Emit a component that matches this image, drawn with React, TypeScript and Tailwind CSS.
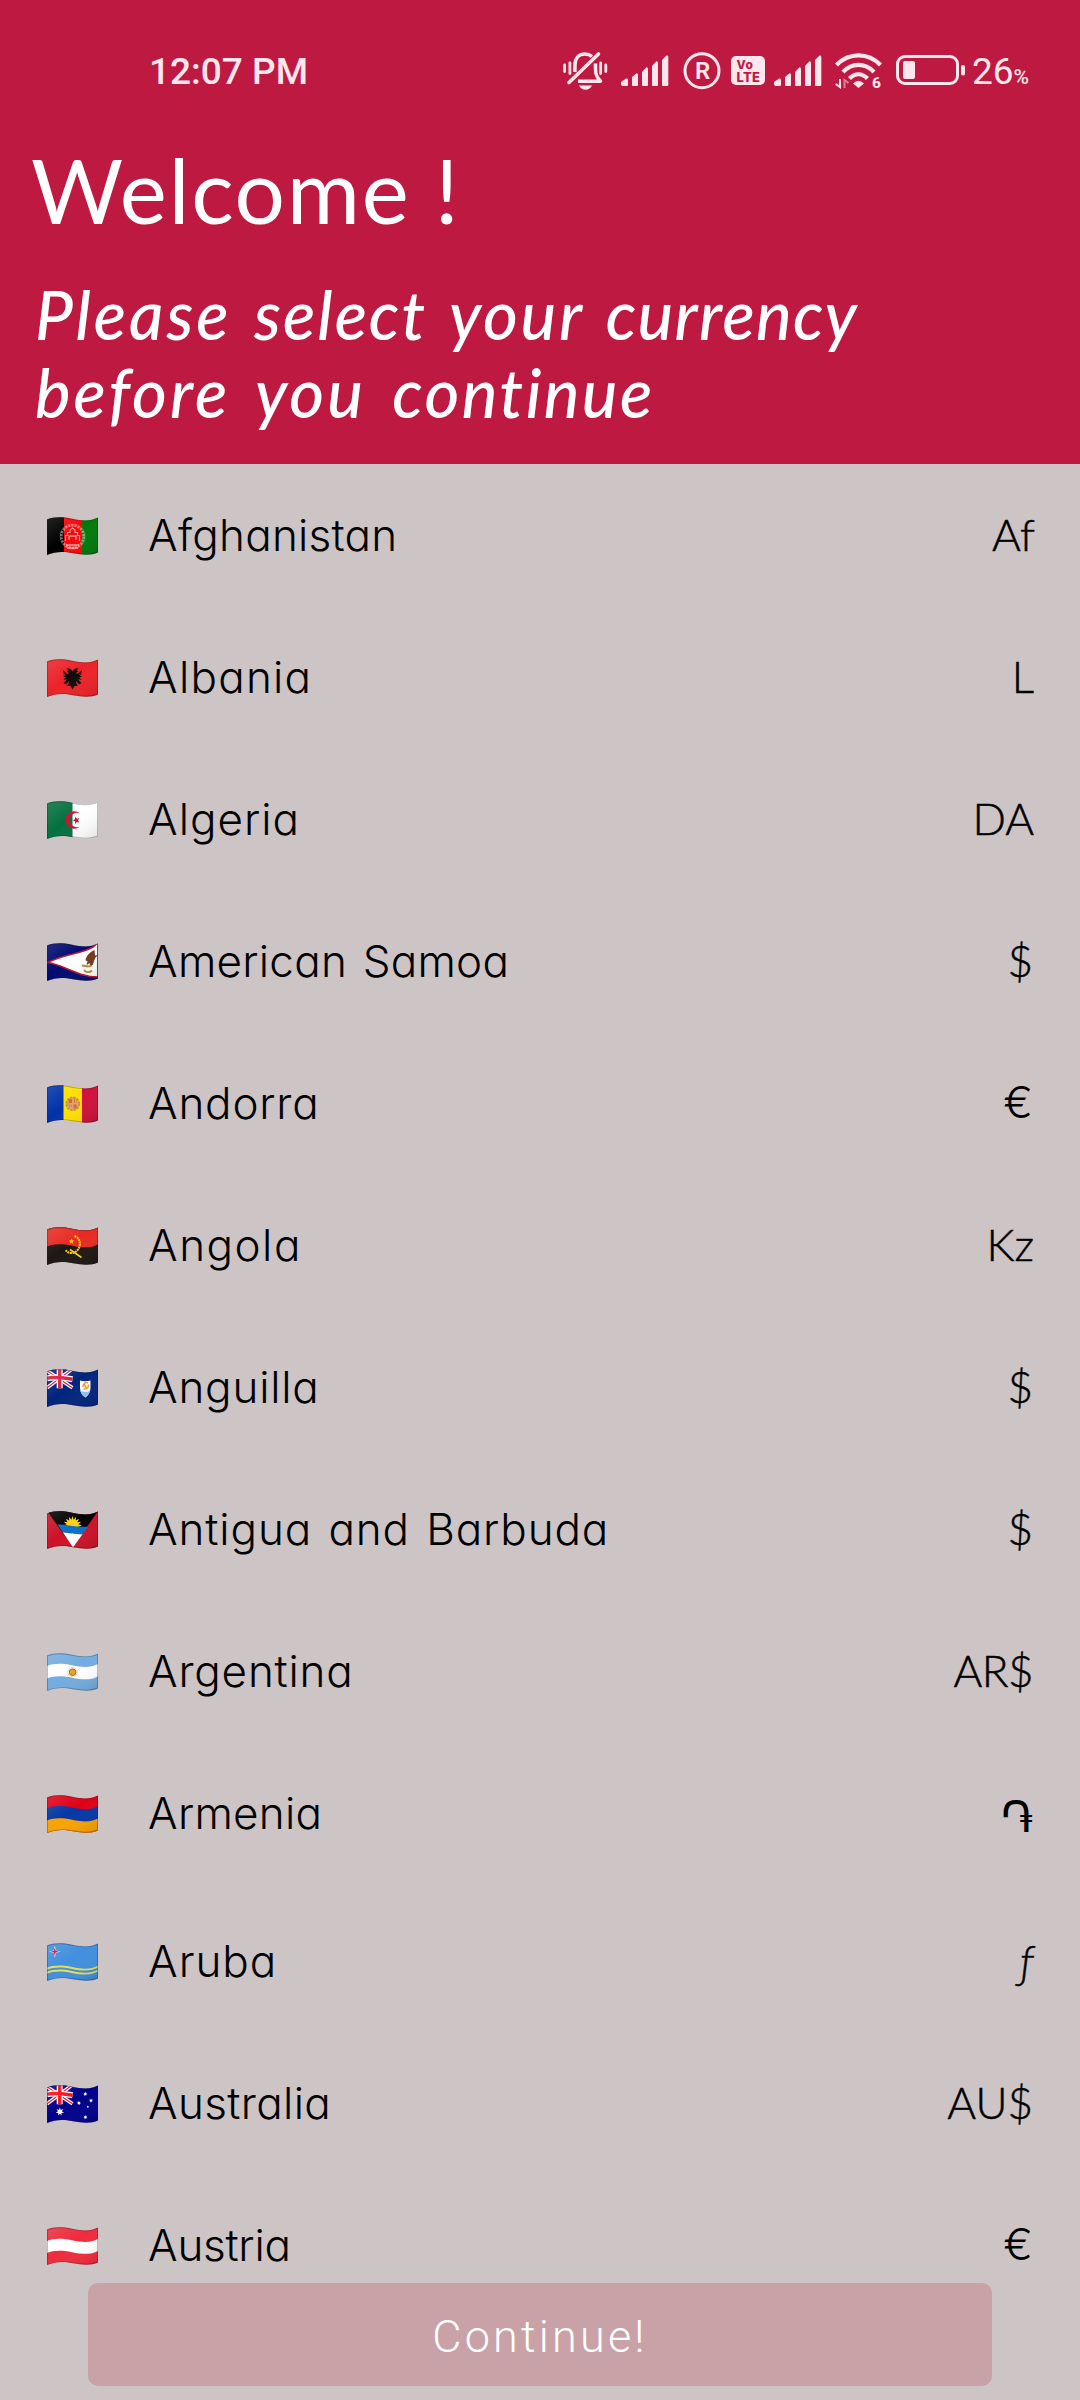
import React, { useId } from "react";

const CREAM = "#fde6ec";
const OUTLINE =
  "M0 2.5 C6 0 14 -.5 25 1.8 S44 4.2 51 .4 V35.5 C45 38.2 37 38.4 26 36.3 S8 35 0 38 Z";

/** Wavy band that follows the top edge of the cloth. */
function Band({ y, h, c }: { y: number; h: number; c: string }) {
  return (
    <path
      transform={`translate(0 ${y})`}
      d={`M0 2.5 C6 0 14 -.5 25 1.8 S44 4.2 51 .4 V${h + 0.4} C44 ${h + 4.2} 36 ${h + 4} 25 ${h + 1.8} S6 ${h} 0 ${h + 2.5} Z`}
      fill={c}
    />
  );
}

function UnionJack({ blue, red }: { blue: string; red: string }) {
  return (
    <g transform="translate(0 .8)">
      <path d="M0 0H25.5V18L0 18Z" fill={blue} />
      <path d="M0 1L25.5 18M25.5 -1L0 18" stroke="#fff" strokeWidth="3.6" />
      <path d="M0 1L25.5 18M25.5 -1L0 18" stroke={red} strokeWidth="1.2" />
      <path d="M12.7 -2V18.5M0 8.4C9 6.5 16 8 25.5 9.4" stroke="#fff" strokeWidth="6" fill="none" />
      <path d="M12.7 -2V18.5M0 8.4C9 6.5 16 8 25.5 9.4" stroke={red} strokeWidth="3.4" fill="none" />
    </g>
  );
}

function star(cx: number, cy: number, r: number, n: number, inner = 0.45) {
  const pts: string[] = [];
  for (let i = 0; i < n * 2; i++) {
    const a = (Math.PI * i) / n - Math.PI / 2;
    const q = i % 2 ? r * inner : r;
    pts.push(`${(cx + q * Math.cos(a)).toFixed(2)},${(cy + q * Math.sin(a)).toFixed(2)}`);
  }
  return pts.join(" ");
}

const art: Record<string, React.ReactNode> = {
  af: (
    <>
      <rect width="17" height="38" fill="#000" />
      <rect x="17" width="18" height="38" fill="#f90508" />
      <rect x="35" width="16" height="38" fill="#007a0b" />
      <circle cx="25.5" cy="19.5" r="11.2" fill="none" stroke="#fff" strokeOpacity=".45" strokeWidth="2.6" strokeDasharray="2.2 1" />
      <circle cx="25.5" cy="19.5" r="12.7" fill="none" stroke="#fff" strokeOpacity=".3" strokeWidth=".5" />
      <path d="M18.5 24V18.5H20.5V15.5H23V13L25.5 11L28 13V15.5H30.5V18.5H32.5V24" fill="none" stroke="#fff" strokeOpacity=".6" strokeWidth="1.2" />
      <path d="M19 28H32M20 31H31M22 23V19H29V23" fill="none" stroke="#fff" strokeOpacity=".6" strokeWidth="1.3" />
    </>
  ),
  al: (
    <>
      <rect width="51" height="38" fill="#ec2228" />
      <path
        d="M25.5 12L23 9.5L19.5 9.2L21.5 11.5L19.5 12L22 14L20.5 15L16 11L16 13.5H18L16 15.5H19L16 18H19L16.5 20.5H20L16.5 24L19 25.5L22 22L21.5 25L20 27H23.5L25.5 30.5L27.5 27H31L29.5 25L29 22L32 25.5L34.5 24L31 20.5H34.5L32 18H35L32 15.5H35L33 13.5H35V11L30.5 15L29 14L31.5 12L29.5 11.5L31.5 9.2L28 9.5Z"
        fill="#100b0b"
      />
    </>
  ),
  dz: (
    <>
      <rect width="26" height="38" fill="#04703f" />
      <rect x="25.5" width="26" height="38" fill="#fff" />
      <path d="M33 12.5A8.700 8.700 0 1 0 33 25.500A7.200 7.200 0 1 1 33 12.500Z" fill="#d21034" />
      <polygon points={star(29.3, 19.3, 3.8, 5)} transform="rotate(-90 29.3 19.3)" fill="#d21034" />
    </>
  ),
  as: (
    <>
      <rect width="51" height="38" fill="#000a70" />
      <path d="M51 -1L46 4C34 11 17 11 1 19.5C17 22 31 34 51 34Z" fill="#fff" stroke="#bd1030" strokeWidth="1.6" />
      <path d="M47.5 7C43 9 39 13 38.5 17.5L40.5 18L39.5 22L43 20L42.5 24L46 21.5L47 18L48.5 14.5L51 12L48 12.5Z" fill="#6e3a1c" />
      <path d="M35 22.5L41 23.5L45 22.5M37 27C39 30 43 29.5 45 27.5" fill="none" stroke="#b48a35" strokeWidth="1.8" />
    </>
  ),
  ad: (
    <>
      <rect width="17" height="38" fill="#0032a8" />
      <rect x="16.5" width="19" height="38" fill="#fedf00" />
      <rect x="35" width="16" height="38" fill="#d0103a" />
      <circle cx="25.8" cy="18.8" r="6.5" fill="#d9a66a" stroke="#b59543" strokeWidth="1.8" strokeDasharray="2.2 1.2" />
      <path d="M21.8 14H25V18H21.8ZM26.5 19.5H29.7V23.5H26.5Z" fill="#e0662b" />
      <path d="M27 14H30V18H27ZM22 19.5H25V22.5H22Z" fill="#f1c27a" />
      <path d="M27.6 14V18M29.2 14V18M22.7 19.5V22.5M24.2 19.5V22.5" stroke="#d0552b" strokeWidth=".8" />
    </>
  ),
  ao: (
    <>
      <rect width="51" height="38" fill="#1c1713" />
      <Band y={-1} h={18} c="#e72a22" />
      <path d="M27.5 9C35.5 11.5 34.5 24.5 25 26C22 26.2 20 24.8 18.6 23.3" fill="none" stroke="#f5cc1c" strokeWidth="2" strokeDasharray="2 .6" />
      <path d="M23 22.5L34.5 30.5" stroke="#f5cc1c" strokeWidth="1.6" />
      <polygon points={star(24.5, 14.3, 2.9, 5)} fill="#f5cc1c" />
    </>
  ),
  ai: (
    <>
      <rect width="51" height="38" fill="#01247d" />
      <UnionJack blue="#01247d" red="#d5203f" />
      <path d="M33 11.5C36 12.5 40 12.5 43.5 11.5V19C43 24 40.5 27 38.5 28.5C36 27 33.3 24 33 19Z" fill="#fff" />
      <path d="M33.3 22C36 23 41 23 43.2 22C42.2 25 40.5 27 38.5 28.5C36 27 34 25 33.3 22Z" fill="#8ec5e8" />
      <path d="M36 18C36 14 39 13 41 14M41.5 15.5C42 19 39 20.5 36.5 20M37 15L40 20" fill="none" stroke="#f39a2b" strokeWidth="1.5" />
    </>
  ),
  ag: (
    <>
      <rect width="51" height="38" fill="#ce1126" />
      <path d="M0 0H51L26 36Z" fill="#000" />
      <polygon points={star(25.5, 14.5, 9.5, 16, 0.62)} fill="#fcd116" />
      <path d="M10.5 13.5C20 13 30 17 41 15.5L35.5 23.2C29 23.5 23 22 15.8 21.2Z" fill="#0a6fc9" />
      <path d="M15.8 21.2C23 22 29 23.5 35.5 23.2L26 36.5Z" fill="#fff" />
    </>
  ),
  ar: (
    <>
      <rect width="51" height="38" fill="#74acdf" />
      <Band y={10.5} h={12.5} c="#fff" />
      <circle cx="25.6" cy="19.2" r="3.3" fill="#f0a11c" stroke="#9a6a2c" strokeWidth="1" />
      <circle cx="25.6" cy="19.2" r="4.6" fill="none" stroke="#d39a4a" strokeWidth=".8" strokeDasharray=".8 .8" />
    </>
  ),
  am: (
    <>
      <rect width="51" height="38" fill="#e00016" />
      <Band y={10.8} h={12.5} c="#0637a6" />
      <Band y={23} h={16} c="#f7a303" />
    </>
  ),
  aw: (
    <>
      <rect width="51" height="38" fill="#418fde" />
      <Band y={22.3} h={1.9} c="#e9e04f" />
      <Band y={26.3} h={1.9} c="#e9e04f" />
      <polygon points={star(7.8, 8.7, 5.8, 4, 0.28)} fill="#fff" />
      <polygon points={star(7.8, 8.7, 4.3, 4, 0.28)} fill="#d21034" />
    </>
  ),
  au: (
    <>
      <rect width="51" height="38" fill="#00008b" />
      <UnionJack blue="#00008b" red="#fb0d14" />
      <polygon points={star(12.9, 26.7, 4.3, 7)} fill="#fff" />
      <polygon points={star(38.3, 9, 2.2, 7)} fill="#fff" />
      <polygon points={star(31.9, 18, 2.2, 7)} fill="#fff" />
      <polygon points={star(44, 15.6, 2.2, 7)} fill="#fff" />
      <polygon points={star(38.4, 32.2, 2.2, 7)} fill="#fff" />
      <polygon points={star(40.8, 21.8, 1.3, 5)} fill="#fff" />
    </>
  ),
  at: (
    <>
      <rect width="51" height="38" fill="#ef2b3c" />
      <Band y={11.5} h={12} c="#fff" />
    </>
  ),
};

function Flag({ code }: { code: string }) {
  const id = useId();
  return (
    <svg width="51" height="39" viewBox="0 0 51 39" className="block shrink-0">
      <defs>
        <clipPath id={id}>
          <path d={OUTLINE} />
        </clipPath>
        <linearGradient id={`${id}s`} x1="0" y1="0" x2="1" y2="1">
          <stop offset="0" stopColor="#fff" stopOpacity=".14" />
          <stop offset=".45" stopColor="#fff" stopOpacity="0" />
          <stop offset="1" stopColor="#000" stopOpacity=".12" />
        </linearGradient>
      </defs>
      <g clipPath={`url(#${id})`}>
        {art[code]}
        <path d={OUTLINE} fill={`url(#${id}s)`} />
        <path d={OUTLINE} fill="none" stroke="#1a1a1a" strokeOpacity=".28" strokeWidth="2" />
      </g>
    </svg>
  );
}

type Row = { code: string; name: string; symbol: string; track: string; sym: string; tall?: boolean };

const LETTERS = "font-[Lato] font-light mr-[1px] [-webkit-text-stroke:0.5px_black]";
const DOLLAR = "font-[Lato] font-light mr-[2px] [-webkit-text-stroke:0.5px_black]";
const EURO = "font-[Inter] font-light mr-[2px]";

const rows: Row[] = [
  { code: "af", name: "Afghanistan", symbol: "Af", track: "tracking-[0.25px]", sym: "font-[Lato] font-light [-webkit-text-stroke:0.5px_black]" },
  { code: "al", name: "Albania", symbol: "L", track: "tracking-[1.25px]", sym: LETTERS },
  { code: "dz", name: "Algeria", symbol: "DA", track: "tracking-[1px]", sym: LETTERS },
  { code: "as", name: "American Samoa", symbol: "$", track: "tracking-[0.25px] [word-spacing:3px]", sym: DOLLAR },
  { code: "ad", name: "Andorra", symbol: "€", track: "tracking-[0.8px]", sym: EURO },
  { code: "ao", name: "Angola", symbol: "Kz", track: "tracking-[1.5px]", sym: LETTERS },
  { code: "ai", name: "Anguilla", symbol: "$", track: "tracking-[0.8px]", sym: DOLLAR },
  { code: "ag", name: "Antigua and Barbuda", symbol: "$", track: "tracking-[0.9px] [word-spacing:3px]", sym: DOLLAR },
  { code: "ar", name: "Argentina", symbol: "AR$", track: "tracking-[0.8px]", sym: "font-[Lato] font-light mr-[2px] tracking-[-0.5px] [-webkit-text-stroke:0.5px_black]" },
  { code: "am", name: "Armenia", symbol: "֏", track: "tracking-[0.25px]", sym: "font-[Lato] font-light mr-[2px] pt-[3px]", tall: true },
  { code: "aw", name: "Aruba", symbol: "ƒ", track: "tracking-[1px]", sym: "font-[Lato] font-light italic mr-[2px] [-webkit-text-stroke:0.4px_black]" },
  { code: "au", name: "Australia", symbol: "AU$", track: "tracking-[0.35px]", sym: DOLLAR },
  { code: "at", name: "Austria", symbol: "€", track: "tracking-[-0.25px]", sym: EURO },
];

function Signal() {
  return (
    <svg width="48" height="32" viewBox="0 0 48 32" fill={CREAM} className="block shrink-0">
      <path d="M0 27L5 23.500Q7 23 7 25V30Q7 31 6 31H2Q0 31 0 29Z" />
      <path d="M11 22L15.500 18.300Q17 18 17 20V30Q17 31 16 31H12Q11 31 11 30Z" />
      <path d="M21 17L25.500 12.300Q27 12 27 14V30Q27 31 26 31H22Q21 31 21 30Z" />
      <path d="M31 11L35.500 6.300Q37 6 37 8V30Q37 31 36 31H32Q31 31 31 30Z" />
      <path d="M41 5L45.500 .6Q47.300 0 47.300 2V30Q47.300 31 46 31H42Q41 31 41 30Z" />
    </svg>
  );
}

function StatusBar() {
  return (
    <div className="flex h-[141px] items-start pl-[149px] pt-[50px] text-[#fde6ec]">
      <span className="w-[414px] font-[Roboto] text-[37px] leading-[44px] font-medium whitespace-nowrap">12:07 PM</span>
      <svg width="45" height="40" viewBox="0 0 45 40" fill="none" stroke={CREAM} className="block shrink-0">
        <path d="M1.6 15V21.5M6.9 12.8V23.5M37.6 12.8V23.5M42.8 15V21.5" strokeWidth="2.8" strokeLinecap="round" />
        <path d="M11.8 22C12 20 12 18 12 15C12 8 16 4 22 4C24.5 4 27 4.8 29 6.5M32.5 13.5V19C32.5 25 34 27.5 37.5 31.3H15" strokeWidth="3.6" strokeLinejoin="round" />
        <path d="M35.5 4L6 32.5" strokeWidth="3.6" strokeLinecap="round" />
        <path d="M16 35.5H29C27.5 38.5 25 39.8 22.5 39.8C20 39.8 17.5 38.5 16 35.5Z" fill={CREAM} stroke="none" />
      </svg>
      <div className="mt-[5px] ml-[13px]"><Signal /></div>
      <svg width="38" height="38" viewBox="0 0 38 38" className="mt-[2px] ml-[14px] block shrink-0">
        <circle cx="19" cy="18.7" r="17" fill="none" stroke={CREAM} strokeWidth="3" />
        <text x="12" y="27" fontFamily="Roboto" fontWeight="600" fontSize="24" fill={CREAM}>R</text>
      </svg>
      <svg width="34" height="30" viewBox="0 0 34 30" className="mt-[6px] ml-[10px] block shrink-0">
        <rect width="34" height="29" rx="5" fill={CREAM} />
        <text x="5.5" y="12.8" fontFamily="Inter" fontWeight="800" fontSize="12" fill="#be1941" textLength="16.5">Vo</text>
        <text x="5.5" y="25.5" fontFamily="Inter" fontWeight="800" fontSize="13" fill="#be1941" textLength="23.5">LTE</text>
      </svg>
      <div className="mt-[5px] ml-[9px]"><Signal /></div>
      <svg width="47" height="40" viewBox="0 0 47 40" fill="none" stroke={CREAM} className="mt-[3px] ml-[13px] block shrink-0 overflow-visible">
        <path d="M1.5 12C14 -.8 33 -.8 45.5 12M8 19C17 9.5 30 9.5 39 19M14.5 25.5C20 20 27 20 32.5 25.5" strokeWidth="4.3" />
        <path d="M18 30.5Q23.5 25 29 30.5L23.5 35Z" fill={CREAM} stroke="none" />
        <path d="M5 26V34L.8 31" strokeWidth="2" />
        <path d="M9.500 35V27L13.500 30" strokeWidth="2" opacity=".5" />
        <text x="37" y="35" fontFamily="Roboto" fontWeight="800" fontSize="15.5" fill={CREAM} stroke="none">6</text>
      </svg>
      <svg width="70" height="32" viewBox="0 0 70 32" className="mt-[5px] ml-[14px] block shrink-0">
        <rect x="1.5" y="1.5" width="60" height="27" rx="7.5" fill="none" stroke={CREAM} strokeWidth="3" />
        <rect x="7" y="6" width="12" height="18" rx="2" fill={CREAM} />
        <rect x="65" y="10" width="4" height="10.5" rx="1.8" fill={CREAM} />
      </svg>
      <span className="ml-[6px] font-[Roboto] text-[37px] leading-[44px] whitespace-nowrap">26<span className="text-[21px] font-medium">%</span></span>
    </div>
  );
}

export default function App() {
  return (
    <div className="relative h-[2400px] w-[1080px] overflow-hidden bg-[#cdc4c5]">
      <header className="h-[464px] bg-[#be1941] text-white">
        <StatusBar />
        <h1 className="h-[134px] pl-[31px] font-[Lato] text-[89px] leading-[98px] tracking-[1.7px]">Welcome !</h1>
        <p className="pl-[35px] font-[Lato] text-[67px] leading-[78px] font-medium tracking-[3px] italic">
          <span className="[word-spacing:4px]">
            Please <span className="tracking-[2.1px]">select </span>
            <span className="tracking-[2.7px]">your </span>
            <span className="tracking-[1.4px]">currency</span>
          </span>
          <br />
          <span className="[word-spacing:8px]">
            before you <span className="tracking-[2.4px]">continue</span>
          </span>
        </p>
      </header>
      <main className="text-black">
        {rows.map((r) => (
          <div key={r.code} className={r.tall ? "flex h-[148px] items-start pt-[53px] pr-[45px] pl-[47px]" : "flex h-[142px] items-start pt-[53px] pr-[45px] pl-[47px]"}>
            <Flag code={r.code} />
            <span className={`mt-[-8px] ml-[50px] flex-1 font-[Inter] text-[44px] leading-[52px] font-light whitespace-nowrap [font-feature-settings:'cv11'] ${r.track}`}>{r.name}</span>
            <span className={`mt-[-9px] text-[44px] leading-[52px] whitespace-nowrap ${r.sym}`}>{r.symbol}</span>
          </div>
        ))}
      </main>
      <button className="absolute top-[2283px] left-[88px] flex h-[103px] w-[904px] items-center justify-center rounded-[10px] bg-[#c9a2a8] pt-[5px] font-[Roboto] text-[45px] font-light tracking-[3.2px] text-white">
        Continue!
      </button>
    </div>
  );
}
